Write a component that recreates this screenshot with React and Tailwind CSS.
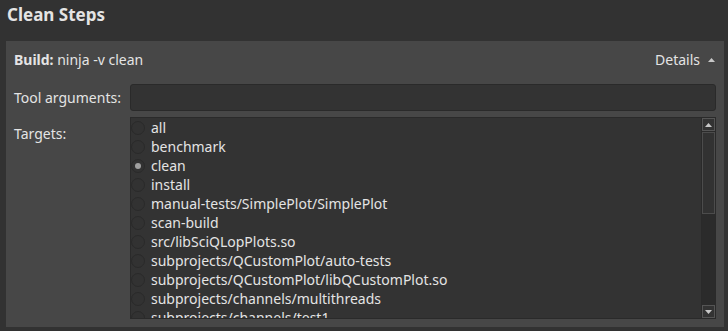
const targets = [
  "all",
  "benchmark",
  "clean",
  "install",
  "manual-tests/SimplePlot/SimplePlot",
  "scan-build",
  "src/libSciQLopPlots.so",
  "subprojects/QCustomPlot/auto-tests",
  "subprojects/QCustomPlot/libQCustomPlot.so",
  "subprojects/channels/multithreads",
  "subprojects/channels/test1",
];

function Radio({ checked }) {
  return (
    <span className="w-[14px] h-[14px] rounded-full border border-[#2a2a2a] bg-[#323232] flex items-center justify-center shrink-0">
      {checked && <span className="w-[6px] h-[6px] rounded-full bg-[#a0a0a0]" />}
    </span>
  );
}

function Arrow({ up }) {
  return (
    <svg width="7" height="4" viewBox="0 0 7 4">
      <path d={up ? "M0 4 L3.5 0 L7 4 Z" : "M0 0 L3.5 4 L7 0 Z"} fill="#c8c8c8" />
    </svg>
  );
}

export default function App() {
  return (
    <div className="w-[728px] h-[331px] bg-[#323232] overflow-hidden font-['Noto_Sans',sans-serif] text-[#e4e4e4]">
      {/* Title */}
      <div className="h-[41px] pl-[7px] pt-[3px] text-[17px] leading-[24px] font-bold">
        Clean Steps
      </div>

      {/* Step panel */}
      <div className="ml-[6px] w-[718px] h-[286px] bg-[#474747] px-[8px] text-[14px]">
        <div className="h-[37px] flex items-center justify-between">
          <div>
            <span className="font-bold">Build:</span> ninja -v clean
          </div>
          <div className="flex items-center gap-[8px] pr-[1px]">
            <span>Details</span>
            <Arrow up />
          </div>
        </div>

        <div className="flex items-center mt-[6px] h-[27px]">
          <div className="w-[116px]">Tool arguments:</div>
          <div className="flex-1 h-[27px] rounded-[3px] border border-[#2a2a2a] bg-[#333333]" />
        </div>

        <div className="flex mt-[6px]">
          <div className="w-[116px] pt-[6px]">Targets:</div>
          <div className="flex-1 h-[202px] border border-[#2a2a2a] bg-[#333333] flex overflow-hidden">
            <div className="flex-1 overflow-hidden">
              {targets.map((t) => (
                <div key={t} className="h-[19px] flex items-center gap-[6px]">
                  <Radio checked={t === "clean"} />
                  <span className="leading-[19px] whitespace-nowrap">{t}</span>
                </div>
              ))}
            </div>
            <div className="w-[14px] bg-[#2b2b2b] flex flex-col border-l border-[#2a2a2a]">
              <div className="h-[13px] border border-[#555555] bg-[#333333] flex items-center justify-center">
                <Arrow up />
              </div>
              <div className="mt-[1px] h-[82px] border border-[#4c4c4c] bg-[#323232]" />
              <div className="flex-1" />
              <div className="h-[13px] border border-[#555555] bg-[#333333] flex items-center justify-center">
                <Arrow />
              </div>
            </div>
          </div>
        </div>
      </div>
    </div>
  );
}
